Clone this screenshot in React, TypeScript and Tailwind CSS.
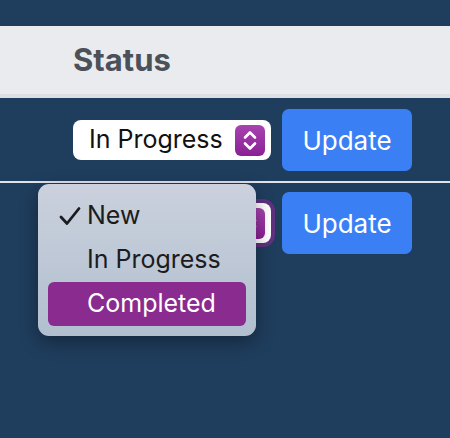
function Stepper() {
  return (
    <span className="flex h-[31px] w-[30px] items-center justify-center rounded-[6px] bg-gradient-to-b from-[#a744b0] to-[#8a1f94]">
      <svg width="30" height="31" viewBox="0 0 30 31" fill="none" stroke="white" strokeWidth="2.6" strokeLinecap="round" strokeLinejoin="round">
        <path d="M10 12.5 L15 7.5 L20 12.5" />
        <path d="M10 18.5 L15 23.5 L20 18.5" />
      </svg>
    </span>
  );
}

function SelectBox({ value, focused }: { value: string; focused?: boolean }) {
  return (
    <div
      className={
        'flex h-[40px] w-[198px] items-center justify-between rounded-[8px] bg-white pl-[16px] pr-[6px] ' +
        (focused ? 'ring-4 ring-[#7a2c8f]/70' : '')
      }
    >
      {/* the open menu sits over the focused select's label */}
      <span className={'text-[25px] text-[#111] ' + (focused ? 'invisible' : '')}>{value}</span>
      <Stepper />
    </div>
  );
}

function UpdateButton() {
  return (
    <button className="flex h-[62px] w-[130px] items-center justify-center rounded-[7px] bg-[#3b7ff5] text-[26px] text-white">
      Update
    </button>
  );
}

export default function App() {
  return (
    <div className="relative h-[438px] w-[450px] overflow-hidden bg-[#1f3d5d] pt-[26px] font-['Inter',sans-serif]">
      <div className="flex h-[72px] items-center border-b-[4px] border-[#dcdfe4] bg-[#e9ebef] pl-[73px] pt-[1px]">
        <span className="text-[31px] font-bold text-[#4b5059]">Status</span>
      </div>
      <div className="flex items-center justify-end gap-[11px] pb-[10px] pr-[38px] pt-[11px]">
        <SelectBox value="In Progress" />
        <UpdateButton />
      </div>
      <div className="h-[2px] bg-[#dfe3ea]" />
      <div className="flex items-center justify-end gap-[11px] pr-[38px] pt-[9px]">
        <SelectBox value="New" focused />
        <UpdateButton />
      </div>

      <div className="absolute left-[38px] top-[184px] w-[218px] rounded-[11px] bg-gradient-to-b from-[#cbd1dd] to-[#b1bfcf] px-[10px] py-[10px] shadow-[0_6px_18px_rgba(0,0,0,0.35)]">
        <div className="flex h-[44px] items-center text-[25px] text-[#1c1c1e]">
          <span className="flex w-[39px] justify-start pl-[10px]">
            <svg width="24" height="20" viewBox="0 0 24 20" fill="none" stroke="#1c1c1e" strokeWidth="2.8" strokeLinecap="round" strokeLinejoin="round">
              <path d="M3 11 L9 17.5 L21 2.5" />
            </svg>
          </span>
          <span>New</span>
        </div>
        <div className="flex h-[44px] items-center text-[25px] text-[#1c1c1e]">
          <span className="w-[39px]" />
          <span>In Progress</span>
        </div>
        <div className="flex h-[44px] items-center rounded-[6px] bg-[#8a2b8f] text-[25px] text-white">
          <span className="w-[39px]" />
          <span>Completed</span>
        </div>
      </div>
    </div>
  );
}
